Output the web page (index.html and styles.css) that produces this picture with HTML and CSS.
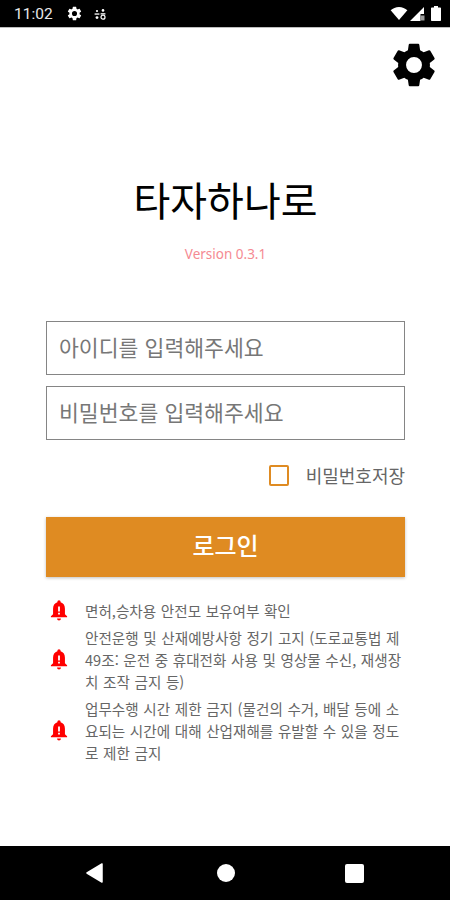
FILE: index.html
```html
<!DOCTYPE html>
<html lang="ko">
<head>
<meta charset="utf-8">
<title>타자하나로</title>
<link rel="stylesheet" href="styles.css">
</head>
<body>
<div class="phone">
  <header class="status">
    <span class="time">11:02</span>
    <svg class="st-gear" viewBox="0 0 24 24"><path fill="#fff" d="M19.14 12.94c.04-.3.06-.61.06-.94s-.02-.64-.07-.94l2.03-1.58a.49.49 0 0 0 .12-.61l-1.92-3.32a.49.49 0 0 0-.59-.22l-2.39.96a7 7 0 0 0-1.62-.94l-.36-2.54a.48.48 0 0 0-.48-.41h-3.84a.48.48 0 0 0-.47.41l-.36 2.54c-.59.24-1.13.57-1.62.94l-2.39-.96a.49.49 0 0 0-.59.22L2.74 8.87a.48.48 0 0 0 .12.61l2.03 1.58c-.05.3-.09.63-.09.94s.02.64.07.94l-2.03 1.58a.49.49 0 0 0-.12.61l1.92 3.32c.12.22.37.29.59.22l2.39-.96c.5.38 1.03.7 1.62.94l.36 2.54c.05.24.24.41.48.41h3.84c.24 0 .44-.17.47-.41l.36-2.54c.59-.24 1.13-.56 1.62-.94l2.39.96c.22.08.47 0 .59-.22l1.92-3.32a.48.48 0 0 0-.12-.61zM12 15.6A3.6 3.6 0 1 1 12 8.4a3.6 3.6 0 0 1 0 7.2z"/></svg>
    <svg class="st-dots" viewBox="0 0 12 12"><g fill="#fff"><circle cx="3" cy="3" r="1.1"/><circle cx="9" cy="2.4" r="1.3"/><rect x="0.6" y="5.4" width="4.8" height="1.3"/><rect x="6.6" y="5.2" width="4.8" height="1.3"/><circle cx="3" cy="9.6" r="1.4"/><circle cx="9" cy="9.2" r="2" fill="none" stroke="#fff" stroke-width="1.2"/></g></svg>
    <span class="spacer"></span>
    <svg class="st-wifi" viewBox="0 0 18 14"><path fill="#fff" d="M0 3.6C2.4 1.4 5.5 0 9 0s6.600 1.400 9 3.600L9 14z"/></svg>
    <svg class="st-signal" viewBox="0 0 15 14"><path fill="#fff" d="M14 0v7h-3.500v7H0z"/><path fill="#9a9a9a" d="M10.500 8.500h4v5h-4z"/></svg>
    <svg class="st-batt" viewBox="0 0 10 15"><path fill="#fff" d="M3 0h4v1.500h2.200a.8.8 0 0 1 .8.8V14.200a.8.8 0 0 1-.8.8H.8a.8.8 0 0 1-.8-.8V2.300a.8.8 0 0 1 .8-.8H3z"/></svg>
  </header>
  <main class="content">
    <div class="top-row">
      <svg class="gear" viewBox="2.300 1.600 19.400 20.800"><path fill="#000" d="M19.140 12.940c.04-.3.06-.61.06-.94s-.02-.64-.07-.94l2.030-1.580a.49.49 0 0 0 .12-.61l-1.920-3.320a.49.49 0 0 0-.59-.22l-2.390.96a7 7 0 0 0-1.620-.94l-.36-2.540a.48.48 0 0 0-.48-.41h-3.840a.48.48 0 0 0-.47.41l-.36 2.540c-.59.24-1.130.57-1.620.94l-2.390-.96a.49.49 0 0 0-.59.22L2.740 8.870a.48.48 0 0 0 .12.61l2.030 1.580c-.05.3-.09.63-.09.94s.02.64.07.94l-2.030 1.580a.49.49 0 0 0-.12.61l1.920 3.320c.12.22.37.29.59.22l2.390-.96c.5.38 1.030.7 1.620.94l.36 2.540c.05.24.24.41.48.41h3.840c.24 0 .44-.17.47-.41l.36-2.540c.59-.24 1.130-.56 1.620-.94l2.390.96c.22.08.47 0 .59-.22l1.920-3.320a.48.48 0 0 0-.12-.61zM12 15.600A3.600 3.600 0 1 1 12 8.400a3.600 3.600 0 0 1 0 7.200z"/></svg>
    </div>
    <h1 class="title">타자하나로</h1>
    <p class="version">Version 0.3.1</p>
    <div class="field">아이디를 입력해주세요</div>
    <div class="field field-second">비밀번호를 입력해주세요</div>
    <label class="remember"><span class="check"></span><span>비밀번호저장</span></label>
    <button class="login" type="button">로그인</button>
    <ul class="notices">
      <li class="notice">
        <svg class="bell" viewBox="0 0 20 24"><path fill="#f00" fill-rule="evenodd" d="M10 0a1.800 1.800 0 0 1 1.800 1.800v.6C15 3.300 16.600 6 16.600 9.500v6l2.400 2.300V19H1v-1.200l2.400-2.300v-6C3.400 6 5 3.300 8.200 2.400v-.6A1.800 1.800 0 0 1 10 0zM9 7v5.500h2V7zm0 7v2h2v-2z"/><path fill="#f00" d="M7.800 20.300h4.400a2.200 2.200 0 0 1-4.400 0z"/></svg>
        <span class="notice-text">면허,승차용 안전모 보유여부 확인</span>
      </li>
      <li class="notice">
        <svg class="bell" viewBox="0 0 20 24"><path fill="#f00" fill-rule="evenodd" d="M10 0a1.800 1.800 0 0 1 1.800 1.800v.6C15 3.300 16.600 6 16.600 9.500v6l2.400 2.300V19H1v-1.200l2.400-2.300v-6C3.400 6 5 3.300 8.200 2.400v-.6A1.800 1.800 0 0 1 10 0zM9 7v5.500h2V7zm0 7v2h2v-2z"/><path fill="#f00" d="M7.800 20.300h4.400a2.200 2.200 0 0 1-4.400 0z"/></svg>
        <span class="notice-text">안전운행 및 산재예방사항 정기 고지 (도로교통법 제49조: 운전 중 휴대전화 사용 및 영상물 수신, 재생장치 조작 금지 등)</span>
      </li>
      <li class="notice">
        <svg class="bell" viewBox="0 0 20 24"><path fill="#f00" fill-rule="evenodd" d="M10 0a1.800 1.800 0 0 1 1.800 1.800v.6C15 3.300 16.600 6 16.600 9.500v6l2.400 2.300V19H1v-1.200l2.400-2.300v-6C3.400 6 5 3.300 8.200 2.400v-.6A1.800 1.800 0 0 1 10 0zM9 7v5.500h2V7zm0 7v2h2v-2z"/><path fill="#f00" d="M7.800 20.300h4.400a2.200 2.200 0 0 1-4.400 0z"/></svg>
        <span class="notice-text">업무수행 시간 제한 금지 (물건의 수거, 배달 등에 소요되는 시간에 대해 산업재해를 유발할 수 있을 정도로 제한 금지</span>
      </li>
    </ul>
  </main>
  <nav class="navbar">
    <svg class="nav-back" viewBox="0 0 17 20"><path fill="#fff" stroke="#fff" stroke-width="1.500" stroke-linejoin="round" d="M16 1v18L1 10z"/></svg>
    <span class="nav-home"></span>
    <span class="nav-recent"></span>
  </nav>
</div>
</body>
</html>
```

FILE: styles.css
```css
* { box-sizing: border-box; }
html, body { margin: 0; padding: 0; background: #fff; }
body { font-family: "Noto Sans CJK KR", "Noto Sans", sans-serif; }

.phone { width: 450px; height: 900px; display: flex; flex-direction: column; overflow: hidden; }

.status {
  height: 28px; flex: none; background: #000; border-bottom: 1px solid #bdbdbd;
  display: flex; align-items: center; padding: 0 9px 0 14px; color: #fff;
}
.time { font-family: Roboto, sans-serif; font-size: 15.5px; width: 40px; color: #e8e8e8; }
.st-gear { width: 17px; height: 17px; margin-left: 12px; }
.st-dots { width: 12px; height: 12px; margin-left: 11px; }
.spacer { flex: 1; }
.st-wifi { width: 18px; height: 13px; }
.st-signal { width: 15px; height: 14px; margin-left: 2px; }
.st-batt { width: 10px; height: 15px; margin-left: 6px; }

.content { flex: 1; display: flex; flex-direction: column; padding: 0 45px 0 46px; }
.top-row { display: flex; justify-content: flex-end; padding-top: 14px; margin-right: -31px; }
.gear { width: 44px; height: 46px; display: block; }

.title {
  margin: 83px 0 0; font-size: 40px; line-height: 56px; font-weight: 400; text-align: center; color: #000;
}
.version {
  margin: 18px 0 0; font-size: 13.5px; line-height: 18px; text-align: center; color: #f58a92;
  font-family: "Noto Sans", sans-serif;
}
.field {
  margin-top: 58px; height: 54px; border: 1.500px solid #858585; padding: 0 12px 3px;
  display: flex; align-items: center; font-size: 21.6px; color: #777; background: #fff;
}
.field-second { margin-top: 11px; }

.remember {
  margin-top: 24px; height: 22px; display: flex; justify-content: flex-end; align-items: center;
  gap: 17px; font-size: 18px; color: #666;
}
.check { width: 20px; height: 21px; border: 2px solid #df8b22; border-radius: 2px; }

.login {
  margin-top: 31px; height: 60px; width: 100%; border: 0; background: #df8b22; color: #fff;
  font: 500 24px "Noto Sans CJK KR", sans-serif; box-shadow: 0 1px 3px rgba(0,0,0,.25); padding: 0 0 5px;
}

.notices { list-style: none; margin: 23px 0 0; padding: 0; display: flex; flex-direction: column; gap: 5px; }
.notice { display: flex; align-items: center; }
.bell { width: 18px; height: 22px; flex: none; margin-left: 4px; }
.notice-text { margin-left: 17px; font-size: 14.6px; line-height: 22px; word-spacing: .5px; color: #666; }

.navbar {
  height: 54px; flex: none; background: #000; display: flex; align-items: center;
  padding: 0 86px; justify-content: space-between;
}
.nav-back { width: 17px; height: 20px; }
.nav-home { width: 18px; height: 18px; border-radius: 50%; background: #fff; margin-left: 3px; }
.nav-recent { width: 19px; height: 19px; border-radius: 2px; background: #fff; }
```
